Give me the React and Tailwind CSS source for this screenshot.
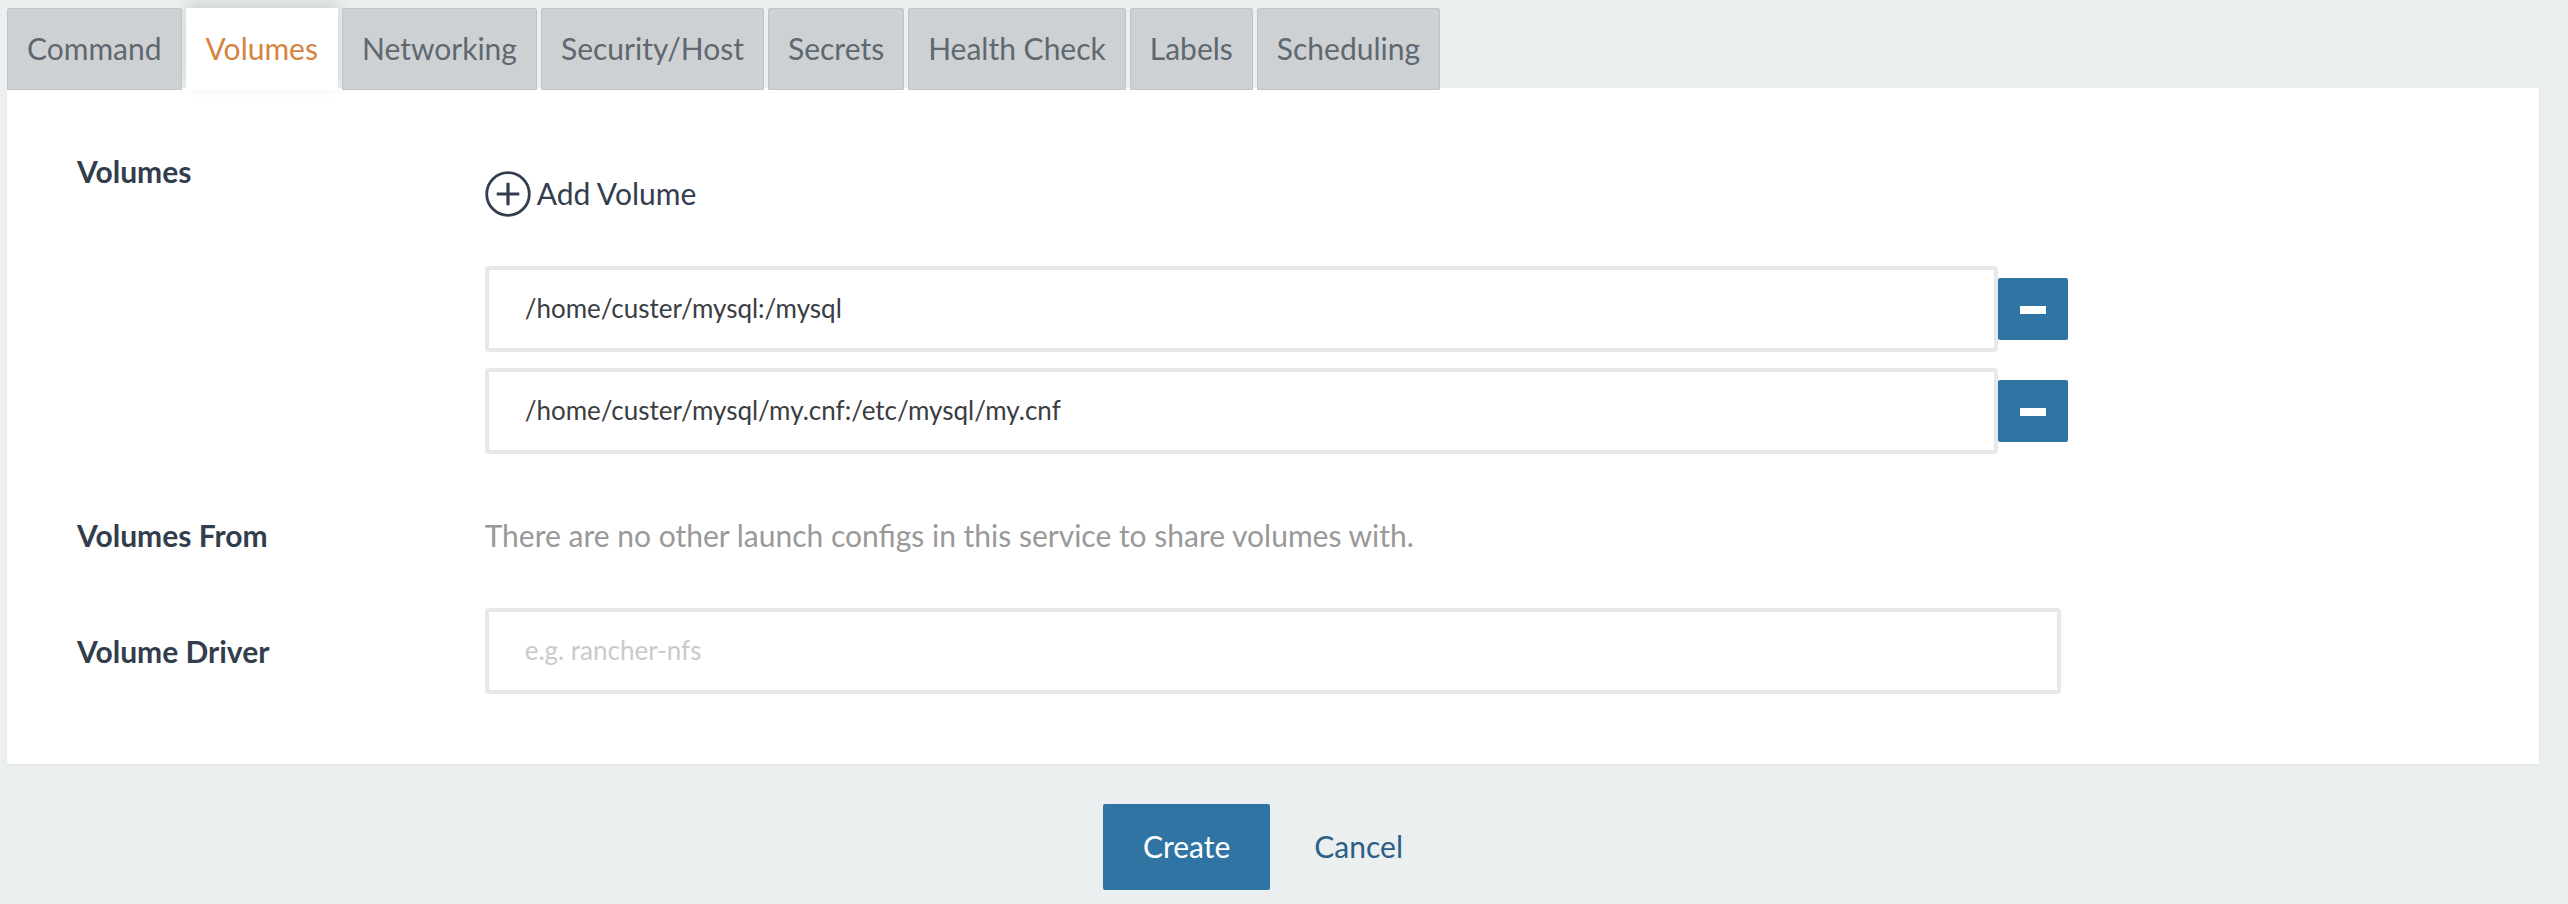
import { useState } from "react";

const TABS = [
  "Command",
  "Volumes",
  "Networking",
  "Security/Host",
  "Secrets",
  "Health Check",
  "Labels",
  "Scheduling",
];

const INPUT =
  "h-[86px] w-full min-w-0 rounded-[4px] border-4 border-[#e6e8e9] bg-white px-9 pb-0.5 text-[26px] text-[#3a3d42] outline-none placeholder:text-[#c9cacd] placeholder:opacity-100";

function TabBar({ active, onSelect }) {
  return (
    <div role="tablist" className="-mb-0.5 flex gap-1">
      {TABS.map((tab) => (
        <button
          key={tab}
          type="button"
          role="tab"
          aria-selected={tab === active}
          onClick={() => onSelect(tab)}
          className={
            tab === active
              ? "h-[82px] bg-white px-5 pb-0.5 text-[#d5843f] shadow-[0_-5px_14px_rgba(0,0,0,0.12)]"
              : "relative h-[82px] rounded-t-[2px] border border-[#c0c4c6] bg-[#cdd1d4] px-[19px] pb-0.5 text-[#5f6870]"
          }
        >
          {tab}
        </button>
      ))}
    </div>
  );
}

function PlusCircle() {
  return (
    <svg viewBox="0 0 46 46" className="size-[46px]" fill="none" stroke="currentColor" aria-hidden="true">
      <circle cx="23" cy="23" r="21.3" strokeWidth="2.8" />
      <path d="M23 11.7v22.6M11.7 23h22.6" strokeWidth="3.2" />
    </svg>
  );
}

function VolumeRow({ value, onChange, onRemove, label }) {
  return (
    <div className="-mr-[7px] flex items-center">
      <input
        type="text"
        aria-label={label}
        value={value}
        onChange={(e) => onChange(e.target.value)}
        className={INPUT}
      />
      <button
        type="button"
        aria-label="Remove volume"
        onClick={onRemove}
        className="flex h-[62px] w-[70px] shrink-0 items-center justify-center rounded-[2px] bg-[#3074a3]"
      >
        <span className="mt-0.5 h-2 w-[26px] bg-white" />
      </button>
    </div>
  );
}

export default function App() {
  const [active, setActive] = useState("Volumes");
  const [driver, setDriver] = useState("");
  const [volumes, setVolumes] = useState([
    "/home/custer/mysql:/mysql",
    "/home/custer/mysql/my.cnf:/etc/mysql/my.cnf",
  ]);

  return (
    <div className="min-h-screen bg-[#ebeff0] pt-2 pr-[29px] pl-[7px] font-[Lato,sans-serif] text-[30px] leading-[44px] text-[#323d4d]">
      <TabBar active={active} onSelect={setActive} />

      <main className="rounded-[2px] bg-white px-10 pt-[61px] pb-[70px] shadow-[0_1px_3px_rgba(0,0,0,0.06)]">
        <section className="grid grid-cols-12">
          <h2 className="col-span-2 px-[30px] font-bold">Volumes</h2>
          <div className="col-span-8 px-[29px] pt-[22px]">
            <button
              type="button"
              onClick={() => setVolumes([...volumes, ""])}
              className="flex items-center gap-1.5"
            >
              <PlusCircle />
              <span className="pb-0.5">Add Volume</span>
            </button>
            <div className="mt-[49px] flex flex-col gap-4">
              {volumes.map((value, i) => (
                <VolumeRow
                  key={i}
                  label={`Volume ${i + 1}`}
                  value={value}
                  onChange={(next) => setVolumes(volumes.map((v, j) => (j === i ? next : v)))}
                  onRemove={() => setVolumes(volumes.filter((_, j) => j !== i))}
                />
              ))}
            </div>
          </div>
        </section>

        <section className="mt-[59px] grid grid-cols-12">
          <h2 className="col-span-2 px-[30px] font-bold">Volumes From</h2>
          <p className="col-span-8 px-[29px] text-[#999999]">
            There are no other launch configs in this service to share volumes with.
          </p>
        </section>

        <section className="mt-[51px] grid grid-cols-12 items-center">
          <label htmlFor="volume-driver" className="col-span-2 px-[30px] font-bold">
            Volume Driver
          </label>
          <div className="col-span-8 flex px-[29px]">
            <input
              id="volume-driver"
              type="text"
              placeholder="e.g. rancher-nfs"
              value={driver}
              onChange={(e) => setDriver(e.target.value)}
              className={INPUT}
            />
          </div>
        </section>
      </main>

      <footer className="flex justify-center gap-1 pt-10 pb-3.5">
        <button type="button" className="h-[86px] rounded-[2px] bg-[#3074a3] px-10 pb-0.5 text-white">
          Create
        </button>
        <button type="button" className="h-[86px] px-10 pb-0.5 text-[#2b5f87]">
          Cancel
        </button>
      </footer>
    </div>
  );
}
